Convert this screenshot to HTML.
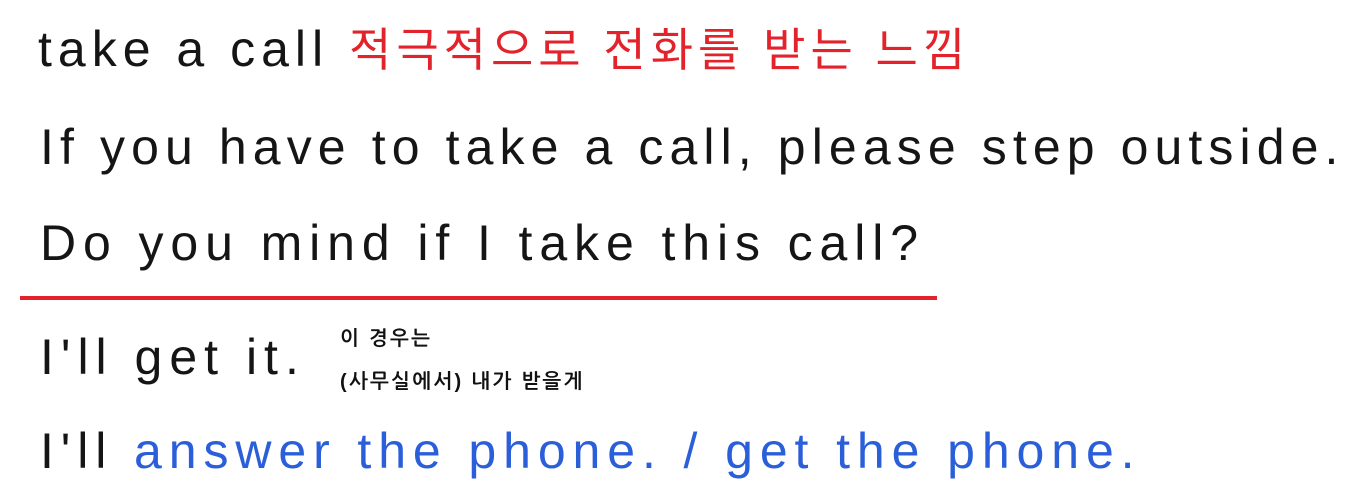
<!DOCTYPE html>
<html><head><meta charset="utf-8"><style>
body{margin:0;width:1371px;height:502px;background:#fff;overflow:hidden;position:relative;font-family:"Liberation Sans","Noto Sans CJK KR",sans-serif;}
.l{position:absolute;white-space:nowrap;color:#151515;font-size:50px;line-height:1;}
.r{color:#e3232b}.b{color:#2b5fd9}
.s{position:absolute;font-size:20px;font-weight:bold;color:#111;letter-spacing:2.3px;font-family:"Liberation Sans","NanumGothic","Noto Sans CJK KR",sans-serif;}
</style></head><body>
<div class="l" style="left:38px;top:24px;letter-spacing:6px">take a call <span class="r" style="font-size:46px;letter-spacing:5px">적극적으로 전화를 받는 느낌</span></div>
<div class="l" style="left:40px;top:122px;letter-spacing:6.1px">If you have to take a call, please step outside.</div>
<div class="l" style="left:40px;top:218px;letter-spacing:6.9px">Do you mind if I take this call?</div>
<div style="position:absolute;left:20px;top:296px;width:917px;height:4px;background:#e3232b"></div>
<div class="l" style="left:40px;top:332px;letter-spacing:7px">I'll get it.</div>
<div class="s" style="left:340px;top:328px">이 경우는</div>
<div class="s" style="left:340px;top:371px">(사무실에서) 내가 받을게</div>
<div class="l" style="left:40px;top:426px;letter-spacing:6.9px">I'll <span class="b">answer the phone. / get the phone.</span></div>
</body></html>
